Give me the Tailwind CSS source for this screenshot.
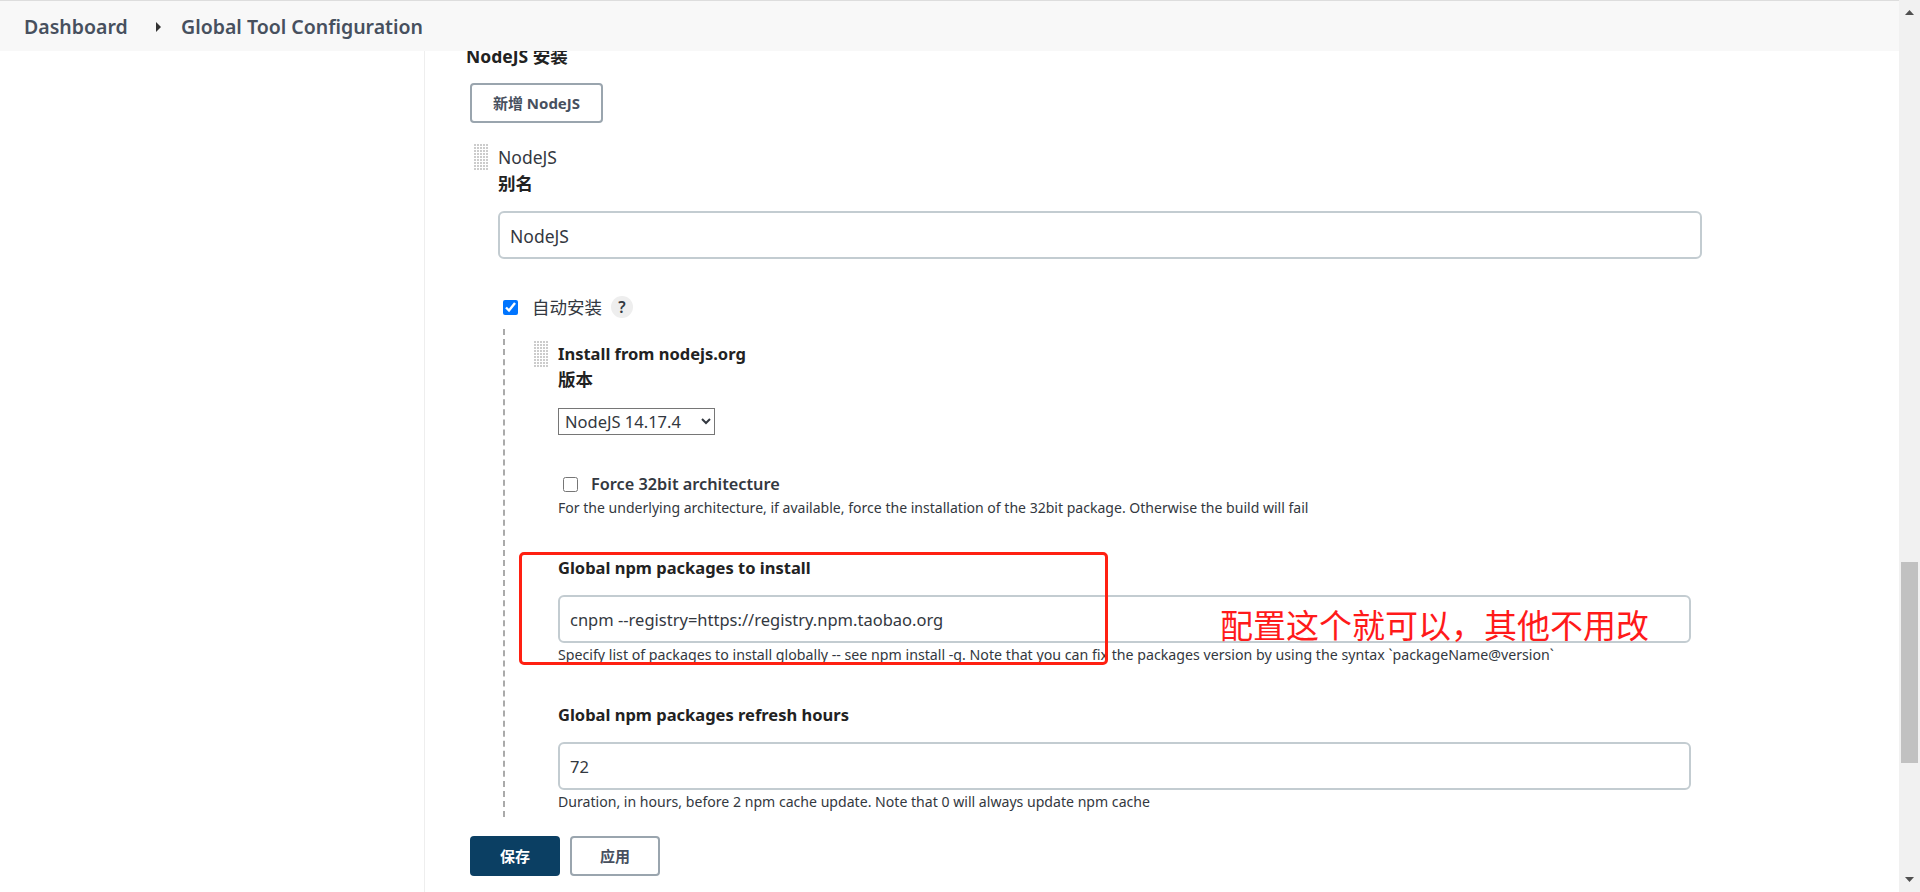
<!DOCTYPE html>
<html lang="zh-CN">
<head>
    <meta charset="UTF-8">
    <title>Global Tool Configuration</title>
    <script src="https://cdn.jsdelivr.net/npm/@tailwindcss/browser@4"></script>
</head>
<body class="bg-white overflow-hidden font-['Noto_Sans','Noto_Sans_CJK_SC',sans-serif] text-[#333840]">
<div class="relative flex h-[892px] w-[1920px] overflow-hidden">
    <div class="flex flex-col w-[1899px]">
        <!-- Breadcrumb bar -->
        <header class="relative z-10 flex items-center h-[51px] shrink-0 border-t border-[#dddddd] bg-[#f8f8f8] pt-[1px] text-[19.5px] font-semibold text-[#47505e]">
            <span class="ml-[24px] w-[132px]">Dashboard</span>
            <svg class="w-[5px] h-[10px]" viewBox="0 0 5 10"><path d="M0 0L5 5L0 10Z" fill="#333"/></svg>
            <span class="ml-[20px]">Global Tool Configuration</span>
        </header>

        <div class="flex flex-1 min-h-0">
            <div class="w-[424px] shrink-0"></div>
            <!-- Form -->
            <main class="flex-1 border-l border-[#eeeeee] pl-[41px]">
                <h3 class="h-[24px] -mt-[7px] text-[17.5px] leading-[24px] font-bold text-[#222]">NodeJS 安装</h3>
                <button class="mt-[15px] ml-[4px] block w-[133px] h-[40px] rounded-[4px] border-2 border-[#9aa5ae] bg-white text-[15px] font-bold text-[#47505e]">新增 NodeJS</button>

                <div class="flex items-start mt-[21px] ml-[8px]">
                    <svg class="w-[15px] h-[26px] shrink-0" viewBox="0 0 15 26"><defs><pattern id="grip1" width="3" height="3" patternUnits="userSpaceOnUse"><rect width="2" height="2" fill="#cccccc"/></pattern></defs><rect width="15" height="26" fill="url(#grip1)"/></svg>
                    <div class="ml-[9px]">
                        <div class="mt-[1px] h-[24px] text-[17.5px] leading-[24px]">NodeJS</div>
                        <div class="mt-[2px] h-[24px] text-[17.5px] leading-[24px] font-bold text-[#222]">别名</div>
                        <input class="mt-[16px] block w-[1204px] h-[48px] rounded-[6px] border-2 border-[#c3ccd1] bg-white px-[10px] pt-[1px] text-[17.5px] text-[#333840]" value="NodeJS">

                        <div class="flex items-center mt-[37px] ml-[5px] h-[22px]">
                            <input type="checkbox" checked class="w-[15px] h-[15px] m-0 accent-[#0075ff]">
                            <span class="ml-[14px] w-[79px] text-[17.5px]">自动安装</span>
                            <span class="flex items-center justify-center w-[22px] h-[22px] rounded-full bg-[#eeeeee] text-[16px] font-semibold">?</span>
                        </div>

                        <!-- Auto install block -->
                        <div class="mt-[11px] ml-[5px] h-[488px] border-l-2 border-dashed border-[#aaaaaa] pl-[29px] pt-[12px]">
                            <div class="flex items-start">
                                <svg class="w-[15px] h-[26px] shrink-0" viewBox="0 0 15 26"><defs><pattern id="grip2" width="3" height="3" patternUnits="userSpaceOnUse"><rect width="2" height="2" fill="#cccccc"/></pattern></defs><rect width="15" height="26" fill="url(#grip2)"/></svg>
                                <div class="ml-[9px]">
                                    <div class="mt-[1px] h-[24px] text-[16.5px] leading-[24px] font-bold text-[#222]">Install from nodejs.org</div>
                                    <div class="mt-[1px] h-[24px] text-[17.5px] leading-[24px] font-bold text-[#222]">版本</div>
                                    <select class="mt-[17px] block w-[157px] h-[27px] border border-[#767676] bg-white pl-[2px] text-[16.5px] text-[#333840]">
                                        <option>NodeJS 14.17.4</option>
                                    </select>

                                    <div class="flex items-center mt-[39px] ml-[5px] h-[20px]">
                                        <input type="checkbox" class="w-[15px] h-[15px] m-0">
                                        <span class="ml-[13px] text-[16.3px] font-semibold leading-[20px]">Force 32bit architecture</span>
                                    </div>
                                    <p class="mt-[4px] h-[20px] text-[14.05px] leading-[20px]">For the underlying architecture, if available, force the installation of the 32bit package. Otherwise the build will fail</p>

                                    <div class="mt-[38px] h-[24px] text-[16.5px] leading-[24px] font-bold text-[#222]">Global npm packages to install</div>
                                    <input class="mt-[15px] block w-[1133px] h-[48px] rounded-[6px] border-2 border-[#c3ccd1] bg-white px-[10px] pt-[1px] text-[16.5px] text-[#333840]" value="cnpm --registry=https://registry.npm.taobao.org">
                                    <p class="mt-[2px] h-[20px] text-[14.2px] leading-[20px]">Specify list of packages to install globally -- see npm install -g. Note that you can fix the packages version by using the syntax `packageName@version`</p>

                                    <div class="mt-[38px] h-[24px] text-[16.5px] leading-[24px] font-bold text-[#222]">Global npm packages refresh hours</div>
                                    <input class="mt-[15px] block w-[1133px] h-[48px] rounded-[6px] border-2 border-[#c3ccd1] bg-white px-[10px] pt-[1px] text-[16.5px] text-[#333840]" value="72">
                                    <p class="mt-[2px] h-[20px] text-[14.1px] leading-[20px]">Duration, in hours, before 2 npm cache update. Note that 0 will always update npm cache</p>
                                </div>
                            </div>
                        </div>
                    </div>
                </div>

                <div class="flex gap-[10px] mt-[19px] ml-[4px]">
                    <button class="w-[90px] h-[40px] rounded-[4px] bg-[#0b3f63] text-[15px] font-bold text-white">保存</button>
                    <button class="w-[90px] h-[40px] rounded-[4px] border-2 border-[#9aa5ae] bg-white text-[15px] font-bold text-[#47505e]">应用</button>
                </div>
            </main>
        </div>
    </div>

    <!-- Scrollbar -->
    <div class="relative flex flex-col items-center w-[21px] shrink-0 bg-[#f1f1f1]">
        <svg class="mt-[10px] w-[9px] h-[5px]" viewBox="0 0 9 5"><path d="M4.5 0L9 5H0Z" fill="#505050"/></svg>
        <div class="absolute left-[2px] top-[562px] w-[17px] h-[201px] bg-[#c1c1c1]"></div>
        <svg class="mt-auto mb-[10px] w-[9px] h-[5px]" viewBox="0 0 9 5"><path d="M0 0H9L4.5 5Z" fill="#505050"/></svg>
    </div>

    <!-- Screenshot annotation -->
    <div class="absolute left-[519px] top-[552px] w-[589px] h-[113px] rounded-[5px] border-[3px] border-[#ff2012]"></div>
    <div class="absolute left-[1220px] top-[604px] text-[33px] leading-[44px] whitespace-nowrap text-[#ff1a1a]">配置这个就可以，其他不用改</div>
</div>
</body>
</html>
